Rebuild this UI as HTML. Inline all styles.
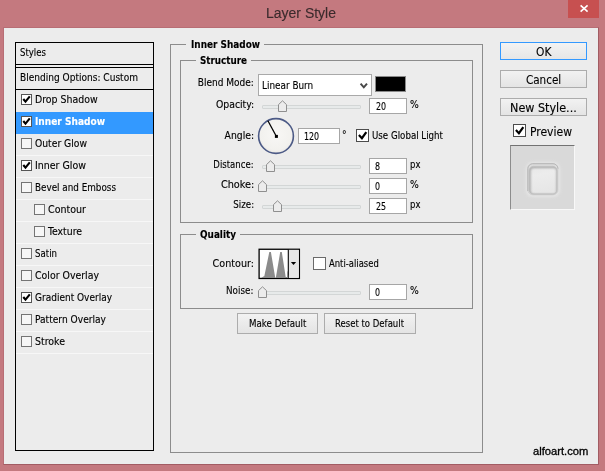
<!DOCTYPE html>
<html lang="en"><head><meta charset="utf-8"><title>Layer Style</title>
<style>
html,body{margin:0;padding:0}
body{width:605px;height:471px;position:relative;overflow:hidden;background:#c4797f;font-family:'DejaVu Sans Condensed','Liberation Sans',sans-serif;}
#root{position:absolute;left:0;top:0;width:605px;height:471px;overflow:hidden}
#root>div,#root>svg{position:absolute}
.t{position:absolute;white-space:pre;line-height:16px;display:block;-webkit-text-stroke:0.12px currentColor}
</style></head><body><div id="root">
<div style="left:3px;top:27px;width:596px;height:438px;box-sizing:border-box;border:1px solid;border-color:#b86e75 #a25c63 #a25c63 #b86e75;"></div>
<div style="left:4px;top:28px;width:594px;height:436px;background:#ececec;"></div>
<div style="left:568px;top:0px;width:31px;height:18px;background:#c75050;"><svg width="31" height="18" viewBox="0 0 31 18" style="position:absolute;left:0;top:0"><path d="M12.6 5.3 L19.6 11.7 M19.6 5.3 L12.6 11.7" stroke="#fff" stroke-width="1.6" fill="none"/></svg></div>
<div style="left:15px;top:42px;width:139px;height:409px;border:1px solid #000;box-sizing:border-box;"></div>
<div style="left:16px;top:64px;width:137px;height:1px;background:#000;"></div>
<div style="left:16px;top:67px;width:137px;height:1px;background:#000;"></div>
<div style="left:16px;top:89px;width:137px;height:1px;background:#000;"></div>
<div style="left:16px;top:112px;width:137px;height:22px;background:#3399ff;"></div>
<div style="left:16px;top:155px;width:137px;height:1px;background:#f7f7f7;"></div>
<div style="left:16px;top:177px;width:137px;height:1px;background:#f7f7f7;"></div>
<div style="left:16px;top:199px;width:137px;height:1px;background:#f7f7f7;"></div>
<div style="left:16px;top:221px;width:137px;height:1px;background:#f7f7f7;"></div>
<div style="left:16px;top:243px;width:137px;height:1px;background:#f7f7f7;"></div>
<div style="left:16px;top:265px;width:137px;height:1px;background:#f7f7f7;"></div>
<div style="left:16px;top:287px;width:137px;height:1px;background:#f7f7f7;"></div>
<div style="left:16px;top:309px;width:137px;height:1px;background:#f7f7f7;"></div>
<div style="left:16px;top:331px;width:137px;height:1px;background:#f7f7f7;"></div>
<div style="left:16px;top:353px;width:137px;height:1px;background:#f7f7f7;"></div>
<div style="left:21px;top:94px;width:11px;height:11px;box-sizing:border-box;border:1px solid #555;background:#fff;"><svg width="11" height="11" viewBox="0 0 11 11" style="position:absolute;left:-1px;top:-1px"><path d="M2.3 5.0 L4.5 7.7 L8.8 2.4" stroke="#000" stroke-width="2.1" fill="none"/></svg></div>
<div style="left:21px;top:116px;width:11px;height:11px;box-sizing:border-box;border:1px solid #555;background:#fff;"><svg width="11" height="11" viewBox="0 0 11 11" style="position:absolute;left:-1px;top:-1px"><path d="M2.3 5.0 L4.5 7.7 L8.8 2.4" stroke="#000" stroke-width="2.1" fill="none"/></svg></div>
<div style="left:21px;top:138px;width:11px;height:11px;box-sizing:border-box;border:1px solid #747474;background:#f6f6f6;"></div>
<div style="left:21px;top:160px;width:11px;height:11px;box-sizing:border-box;border:1px solid #555;background:#fff;"><svg width="11" height="11" viewBox="0 0 11 11" style="position:absolute;left:-1px;top:-1px"><path d="M2.3 5.0 L4.5 7.7 L8.8 2.4" stroke="#000" stroke-width="2.1" fill="none"/></svg></div>
<div style="left:21px;top:182px;width:11px;height:11px;box-sizing:border-box;border:1px solid #747474;background:#f6f6f6;"></div>
<div style="left:34px;top:204px;width:11px;height:11px;box-sizing:border-box;border:1px solid #747474;background:#f6f6f6;"></div>
<div style="left:34px;top:226px;width:11px;height:11px;box-sizing:border-box;border:1px solid #747474;background:#f6f6f6;"></div>
<div style="left:21px;top:248px;width:11px;height:11px;box-sizing:border-box;border:1px solid #747474;background:#f6f6f6;"></div>
<div style="left:21px;top:270px;width:11px;height:11px;box-sizing:border-box;border:1px solid #747474;background:#f6f6f6;"></div>
<div style="left:21px;top:292px;width:11px;height:11px;box-sizing:border-box;border:1px solid #555;background:#fff;"><svg width="11" height="11" viewBox="0 0 11 11" style="position:absolute;left:-1px;top:-1px"><path d="M2.3 5.0 L4.5 7.7 L8.8 2.4" stroke="#000" stroke-width="2.1" fill="none"/></svg></div>
<div style="left:21px;top:314px;width:11px;height:11px;box-sizing:border-box;border:1px solid #747474;background:#f6f6f6;"></div>
<div style="left:21px;top:336px;width:11px;height:11px;box-sizing:border-box;border:1px solid #747474;background:#f6f6f6;"></div>
<div style="left:170px;top:44px;width:16px;height:1px;background:#8c8c8c;"></div>
<div style="left:264px;top:44px;width:219px;height:1px;background:#8c8c8c;"></div>
<div style="left:170px;top:44px;width:1px;height:409px;background:#8c8c8c;"></div>
<div style="left:482px;top:44px;width:1px;height:409px;background:#8c8c8c;"></div>
<div style="left:170px;top:452px;width:313px;height:1px;background:#8c8c8c;"></div>
<div style="left:180px;top:60px;width:16px;height:1px;background:#8c8c8c;"></div>
<div style="left:250.5px;top:60px;width:222.5px;height:1px;background:#8c8c8c;"></div>
<div style="left:180px;top:60px;width:1px;height:163px;background:#8c8c8c;"></div>
<div style="left:472px;top:60px;width:1px;height:163px;background:#8c8c8c;"></div>
<div style="left:180px;top:222px;width:293px;height:1px;background:#8c8c8c;"></div>
<div style="left:180px;top:234px;width:16px;height:1px;background:#8c8c8c;"></div>
<div style="left:239.5px;top:234px;width:233.5px;height:1px;background:#8c8c8c;"></div>
<div style="left:180px;top:234px;width:1px;height:75px;background:#8c8c8c;"></div>
<div style="left:472px;top:234px;width:1px;height:75px;background:#8c8c8c;"></div>
<div style="left:180px;top:308px;width:293px;height:1px;background:#8c8c8c;"></div>
<div style="left:258px;top:74px;width:114px;height:22px;box-sizing:border-box;border:1px solid #a9a9a9;background:#fff;"><svg width="12" height="10" viewBox="0 0 12 10" style="position:absolute;left:99px;top:6px"><path d="M2.6 2.7 L5.8 6.3 L9.0 2.7" stroke="#484848" stroke-width="2" fill="none"/></svg></div>
<div style="left:375px;top:76px;width:31px;height:16px;box-sizing:border-box;border:1px solid #8a8a8a;background:#000;"></div>
<div style="left:369px;top:98px;width:38px;height:16px;box-sizing:border-box;border:1px solid #a6a6a6;background:#fff;"></div>
<div style="left:298px;top:128px;width:42px;height:16px;box-sizing:border-box;border:1px solid #a6a6a6;background:#fff;"></div>
<div style="left:369px;top:158px;width:38px;height:16px;box-sizing:border-box;border:1px solid #a6a6a6;background:#fff;"></div>
<div style="left:369px;top:178px;width:38px;height:16px;box-sizing:border-box;border:1px solid #a6a6a6;background:#fff;"></div>
<div style="left:369px;top:198px;width:38px;height:16px;box-sizing:border-box;border:1px solid #a6a6a6;background:#fff;"></div>
<div style="left:369px;top:284px;width:38px;height:16px;box-sizing:border-box;border:1px solid #a6a6a6;background:#fff;"></div>
<div style="left:262px;top:105px;width:99px;height:4px;box-sizing:border-box;border:1px solid #d3d6d6;background:#e7eaea;border-radius:1px;"></div>
<svg style="left:277px;top:100px" width="11" height="13" viewBox="0 0 11 13"><path d="M1.5 4.6 L5.5 0.8 L9.5 4.6 L9.5 11.5 L1.5 11.5 Z" fill="#ececec" stroke="#8f8f8f" stroke-width="1"/></svg>
<div style="left:262px;top:165px;width:99px;height:4px;box-sizing:border-box;border:1px solid #d3d6d6;background:#e7eaea;border-radius:1px;"></div>
<svg style="left:265px;top:160px" width="11" height="13" viewBox="0 0 11 13"><path d="M1.5 4.6 L5.5 0.8 L9.5 4.6 L9.5 11.5 L1.5 11.5 Z" fill="#ececec" stroke="#8f8f8f" stroke-width="1"/></svg>
<div style="left:262px;top:185px;width:99px;height:4px;box-sizing:border-box;border:1px solid #d3d6d6;background:#e7eaea;border-radius:1px;"></div>
<svg style="left:257px;top:180px" width="11" height="13" viewBox="0 0 11 13"><path d="M1.5 4.6 L5.5 0.8 L9.5 4.6 L9.5 11.5 L1.5 11.5 Z" fill="#ececec" stroke="#8f8f8f" stroke-width="1"/></svg>
<div style="left:262px;top:205px;width:99px;height:4px;box-sizing:border-box;border:1px solid #d3d6d6;background:#e7eaea;border-radius:1px;"></div>
<svg style="left:272px;top:200px" width="11" height="13" viewBox="0 0 11 13"><path d="M1.5 4.6 L5.5 0.8 L9.5 4.6 L9.5 11.5 L1.5 11.5 Z" fill="#ececec" stroke="#8f8f8f" stroke-width="1"/></svg>
<div style="left:262px;top:291px;width:99px;height:4px;box-sizing:border-box;border:1px solid #d3d6d6;background:#e7eaea;border-radius:1px;"></div>
<svg style="left:257px;top:286px" width="11" height="13" viewBox="0 0 11 13"><path d="M1.5 4.6 L5.5 0.8 L9.5 4.6 L9.5 11.5 L1.5 11.5 Z" fill="#ececec" stroke="#8f8f8f" stroke-width="1"/></svg>
<svg style="left:256px;top:116px" width="40" height="40" viewBox="0 0 40 40">
<defs><radialGradient id="dg" cx="50%" cy="45%" r="60%"><stop offset="0" stop-color="#f8f7f5"/><stop offset="0.75" stop-color="#f2f1ee"/><stop offset="1" stop-color="#e4e2de"/></radialGradient></defs>
<circle cx="20" cy="20" r="17.4" fill="url(#dg)" stroke="#4c5a86" stroke-width="1.6"/>
<path d="M20.3 20.3 L11.9 4.8" stroke="#000" stroke-width="1.3"/>
<rect x="18.9" y="18.9" width="3" height="3" fill="#000"/></svg>
<div style="left:356px;top:129px;width:13px;height:13px;box-sizing:border-box;border:1px solid #4c4c4c;background:#fff;"><svg width="13" height="13" viewBox="0 0 13 13" style="position:absolute;left:-1px;top:-1px"><path d="M2.9 6.1 L5.9 9.2 L10.3 3.2" stroke="#000" stroke-width="2.2" fill="none"/></svg></div>
<div style="left:313px;top:257px;width:13px;height:13px;box-sizing:border-box;border:1px solid #6a6a6a;background:#fff;"></div>
<svg style="left:258px;top:248px" width="43" height="32" viewBox="0 0 43 32">
<rect x="1.1" y="1.25" width="40.3" height="29.2" fill="#fff" stroke="#000" stroke-width="1.3"/>
<rect x="30.6" y="1.9" width="10.2" height="27.9" fill="#e6e6e6"/>
<path d="M30.3 1.5 V30.2" stroke="#000" stroke-width="1.1"/>
<path d="M3.2 29.9 L5.4 28.4 L6.3 28.2 L11.3 4.1 L12.9 4.1 L17.3 29.9 Z M17.8 29.9 L22.2 4.1 L23.8 4.1 L27.7 28.9 L29.0 28.9 L29.0 23.6 L29.8 23.2 L30.3 29.9 Z" fill="#8b8b8b"/>
<path d="M32.9 14 L38.1 14 L35.5 16.9 Z" fill="#000"/></svg>
<div style="left:500px;top:42px;width:87px;height:18px;box-sizing:border-box;border:1px solid #3399ff;background:linear-gradient(#f3f3f3,#e6e6e6);"></div>
<div style="left:500px;top:70px;width:87px;height:18px;box-sizing:border-box;border:1px solid #acacac;background:linear-gradient(#f2f2f2,#e4e4e4);"></div>
<div style="left:500px;top:98px;width:87px;height:18px;box-sizing:border-box;border:1px solid #acacac;background:linear-gradient(#f2f2f2,#e4e4e4);"></div>
<div style="left:237px;top:313px;width:81px;height:21px;box-sizing:border-box;border:1px solid #acacac;background:linear-gradient(#f2f2f2,#e4e4e4);"></div>
<div style="left:324px;top:313px;width:92px;height:21px;box-sizing:border-box;border:1px solid #acacac;background:linear-gradient(#f2f2f2,#e4e4e4);"></div>
<div style="left:513px;top:124px;width:13px;height:13px;box-sizing:border-box;border:1px solid #4c4c4c;background:#fff;"><svg width="13" height="13" viewBox="0 0 13 13" style="position:absolute;left:-1px;top:-1px"><path d="M2.9 6.1 L5.9 9.2 L10.3 3.2" stroke="#000" stroke-width="2.2" fill="none"/></svg></div>
<div style="left:510px;top:145px;width:65px;height:65px;box-sizing:border-box;background:#d9d9d9;border-top:1px solid #727272;border-left:1px solid #8c8c8c;border-right:1px solid #f8f8f8;border-bottom:1px solid #f8f8f8;"></div>
<svg style="left:518px;top:154px" width="50" height="50" viewBox="-8 -8 50 50">
<defs><linearGradient id="pg" x1="0" y1="0" x2="0.2" y2="1"><stop offset="0" stop-color="#e6e6e6"/><stop offset="0.35" stop-color="#ececec"/><stop offset="1" stop-color="#e6e6e6"/></linearGradient>
<filter id="pb" x="-30%" y="-30%" width="160%" height="160%"><feGaussianBlur stdDeviation="1.8"/></filter>
<filter id="pb2" x="-30%" y="-30%" width="160%" height="160%"><feGaussianBlur stdDeviation="0.9"/></filter>
<clipPath id="pc"><rect x="3.1" y="4.4" width="28" height="27.8" rx="4.3"/></clipPath></defs>
<rect x="0" y="0" width="34" height="35" rx="7" fill="#ececec" opacity="0.7" filter="url(#pb)"/>
<rect x="1.8" y="1.7" width="30.2" height="31.2" rx="5" fill="#dbdbdb" stroke="#cfcfcf" stroke-width="0.8"/>
<path d="M1.8 29 V6.7 A5 5 0 0 1 6.8 1.7 H27 A5 5 0 0 1 32 6.7" fill="none" stroke="#b3b3b3" stroke-width="0.9"/>
<rect x="3.1" y="4.4" width="28" height="27.8" rx="4.3" fill="url(#pg)"/>
<g clip-path="url(#pc)"><rect x="3.3" y="4.8" width="28.6" height="28.6" rx="4.3" fill="none" stroke="#8e8e8e" stroke-width="2.6" opacity="0.75" filter="url(#pb2)"/></g>
<rect x="3.1" y="4.4" width="28" height="27.8" rx="4.3" fill="none" stroke="#bcbcbc" stroke-width="0.8"/>
</svg>
<span class="t" style="top:45.41px;font-size:9.8px;color:#000;left:20.00px;transform-origin:0 0;transform:scaleX(0.9725);">Styles</span>
<span class="t" style="top:70.41px;font-size:9.8px;color:#000;left:20.00px;transform-origin:0 0;transform:scaleX(1.0253);">Blending Options: Custom</span>
<span class="t" style="top:92.41px;font-size:9.8px;color:#000;left:34.90px;transform-origin:0 0;transform:scaleX(1.0652);">Drop Shadow</span>
<span class="t" style="top:114.41px;font-size:9.8px;color:#fff;font-weight:bold;left:34.90px;transform-origin:0 0;transform:scaleX(1.0247);">Inner Shadow</span>
<span class="t" style="top:136.41px;font-size:9.8px;color:#000;left:34.90px;transform-origin:0 0;transform:scaleX(1.0462);">Outer Glow</span>
<span class="t" style="top:158.41px;font-size:9.8px;color:#000;left:34.90px;transform-origin:0 0;transform:scaleX(1.0737);">Inner Glow</span>
<span class="t" style="top:180.41px;font-size:9.8px;color:#000;left:34.90px;transform-origin:0 0;transform:scaleX(0.9990);">Bevel and Emboss</span>
<span class="t" style="top:202.41px;font-size:9.8px;color:#000;left:47.90px;transform-origin:0 0;transform:scaleX(1.0794);">Contour</span>
<span class="t" style="top:224.41px;font-size:9.8px;color:#000;left:47.90px;transform-origin:0 0;transform:scaleX(1.0604);">Texture</span>
<span class="t" style="top:246.41px;font-size:9.8px;color:#000;left:34.90px;transform-origin:0 0;transform:scaleX(0.9778);">Satin</span>
<span class="t" style="top:268.41px;font-size:9.8px;color:#000;left:34.90px;transform-origin:0 0;transform:scaleX(1.0653);">Color Overlay</span>
<span class="t" style="top:290.41px;font-size:9.8px;color:#000;left:34.90px;transform-origin:0 0;transform:scaleX(1.0207);">Gradient Overlay</span>
<span class="t" style="top:312.41px;font-size:9.8px;color:#000;left:34.90px;transform-origin:0 0;transform:scaleX(1.0334);">Pattern Overlay</span>
<span class="t" style="top:334.41px;font-size:9.8px;color:#000;left:34.90px;transform-origin:0 0;transform:scaleX(1.0702);">Stroke</span>
<span class="t" style="top:37.41px;font-size:9.8px;color:#000;font-weight:bold;left:190.50px;transform-origin:0 0;transform:scaleX(1.0101);">Inner Shadow</span>
<span class="t" style="top:53.41px;font-size:9.8px;color:#000;font-weight:bold;left:200.00px;transform-origin:0 0;transform:scaleX(0.9950);">Structure</span>
<span class="t" style="top:227.41px;font-size:9.8px;color:#000;font-weight:bold;left:200.00px;transform-origin:0 0;transform:scaleX(1.0079);">Quality</span>
<span class="t" style="top:75.41px;font-size:9.8px;color:#000;right:351.20px;transform-origin:100% 0;transform:scaleX(1.0236);">Blend Mode:</span>
<span class="t" style="top:97.41px;font-size:9.8px;color:#000;right:351.20px;transform-origin:100% 0;transform:scaleX(1.0565);">Opacity:</span>
<span class="t" style="top:128.41px;font-size:9.8px;color:#000;right:351.20px;transform-origin:100% 0;transform:scaleX(1.0512);">Angle:</span>
<span class="t" style="top:157.41px;font-size:9.8px;color:#000;right:351.20px;transform-origin:100% 0;transform:scaleX(0.9683);">Distance:</span>
<span class="t" style="top:177.41px;font-size:9.8px;color:#000;right:351.20px;transform-origin:100% 0;transform:scaleX(1.1024);">Choke:</span>
<span class="t" style="top:197.41px;font-size:9.8px;color:#000;right:351.20px;transform-origin:100% 0;transform:scaleX(0.9868);">Size:</span>
<span class="t" style="top:255.91px;font-size:9.8px;color:#000;right:351.20px;transform-origin:100% 0;transform:scaleX(1.0895);">Contour:</span>
<span class="t" style="top:283.41px;font-size:9.8px;color:#000;right:351.20px;transform-origin:100% 0;transform:scaleX(0.9992);">Noise:</span>
<span class="t" style="top:78.41px;font-size:9.8px;color:#000;left:262.40px;transform-origin:0 0;transform:scaleX(1.0064);">Linear Burn</span>
<span class="t" style="top:98.91px;font-size:9.8px;color:#000;left:375.60px;transform-origin:0 0;transform:scaleX(0.9000);">20</span>
<span class="t" style="top:128.91px;font-size:9.8px;color:#000;left:304.40px;transform-origin:0 0;transform:scaleX(0.9000);">120</span>
<span class="t" style="top:158.91px;font-size:9.8px;color:#000;left:375.20px;transform-origin:0 0;transform:scaleX(0.9000);">8</span>
<span class="t" style="top:178.91px;font-size:9.8px;color:#000;left:375.20px;transform-origin:0 0;transform:scaleX(0.9000);">0</span>
<span class="t" style="top:198.91px;font-size:9.8px;color:#000;left:375.60px;transform-origin:0 0;transform:scaleX(0.9000);">25</span>
<span class="t" style="top:284.91px;font-size:9.8px;color:#000;left:375.20px;transform-origin:0 0;transform:scaleX(0.9000);">0</span>
<span class="t" style="top:97.41px;font-size:9.8px;color:#000;left:409.60px;transform-origin:0 0;transform:scaleX(1.0488);">%</span>
<span class="t" style="top:127.41px;font-size:9.8px;color:#000;left:342.40px;transform-origin:0 0;transform:scaleX(1.0440);">°</span>
<span class="t" style="top:157.41px;font-size:9.8px;color:#000;left:409.60px;transform-origin:0 0;transform:scaleX(0.9618);">px</span>
<span class="t" style="top:177.41px;font-size:9.8px;color:#000;left:409.60px;transform-origin:0 0;transform:scaleX(1.0488);">%</span>
<span class="t" style="top:197.41px;font-size:9.8px;color:#000;left:409.60px;transform-origin:0 0;transform:scaleX(0.9618);">px</span>
<span class="t" style="top:283.41px;font-size:9.8px;color:#000;left:409.60px;transform-origin:0 0;transform:scaleX(1.0488);">%</span>
<span class="t" style="top:127.91px;font-size:9.8px;color:#000;left:372.00px;transform-origin:0 0;transform:scaleX(0.9835);">Use Global Light</span>
<span class="t" style="top:255.91px;font-size:9.8px;color:#000;left:328.60px;transform-origin:0 0;transform:scaleX(0.9574);">Anti-aliased</span>
<span class="t" style="top:316.41px;font-size:9.8px;color:#000;left:248.60px;transform-origin:0 0;transform:scaleX(0.9862);">Make Default</span>
<span class="t" style="top:316.41px;font-size:9.8px;color:#000;left:335.00px;transform-origin:0 0;transform:scaleX(0.9686);">Reset to Default</span>
<span class="t" style="top:43.85px;font-size:12px;color:#000;left:535.60px;transform-origin:0 0;transform:scaleX(0.9886);">OK</span>
<span class="t" style="top:71.85px;font-size:12px;color:#000;left:526.40px;transform-origin:0 0;transform:scaleX(0.9619);">Cancel</span>
<span class="t" style="top:99.85px;font-size:12px;color:#000;left:509.60px;transform-origin:0 0;transform:scaleX(1.0374);">New Style...</span>
<span class="t" style="top:123.85px;font-size:12px;color:#000;left:529.60px;transform-origin:0 0;transform:scaleX(1.0004);">Preview</span>
<span class="t" style="top:4.75px;font-size:14px;color:#3a2a2c;font-family:'Liberation Sans',sans-serif;left:265.60px;transform-origin:0 0;transform:scaleX(0.9993);">Layer Style</span>
<span class="t" style="top:442.69px;font-size:11px;color:#000;font-family:'Liberation Sans',sans-serif;left:533.00px;transform-origin:0 0;transform:scaleX(1.0180);-webkit-text-stroke:0.3px #000;">alfoart.com</span>
</div></body></html>
